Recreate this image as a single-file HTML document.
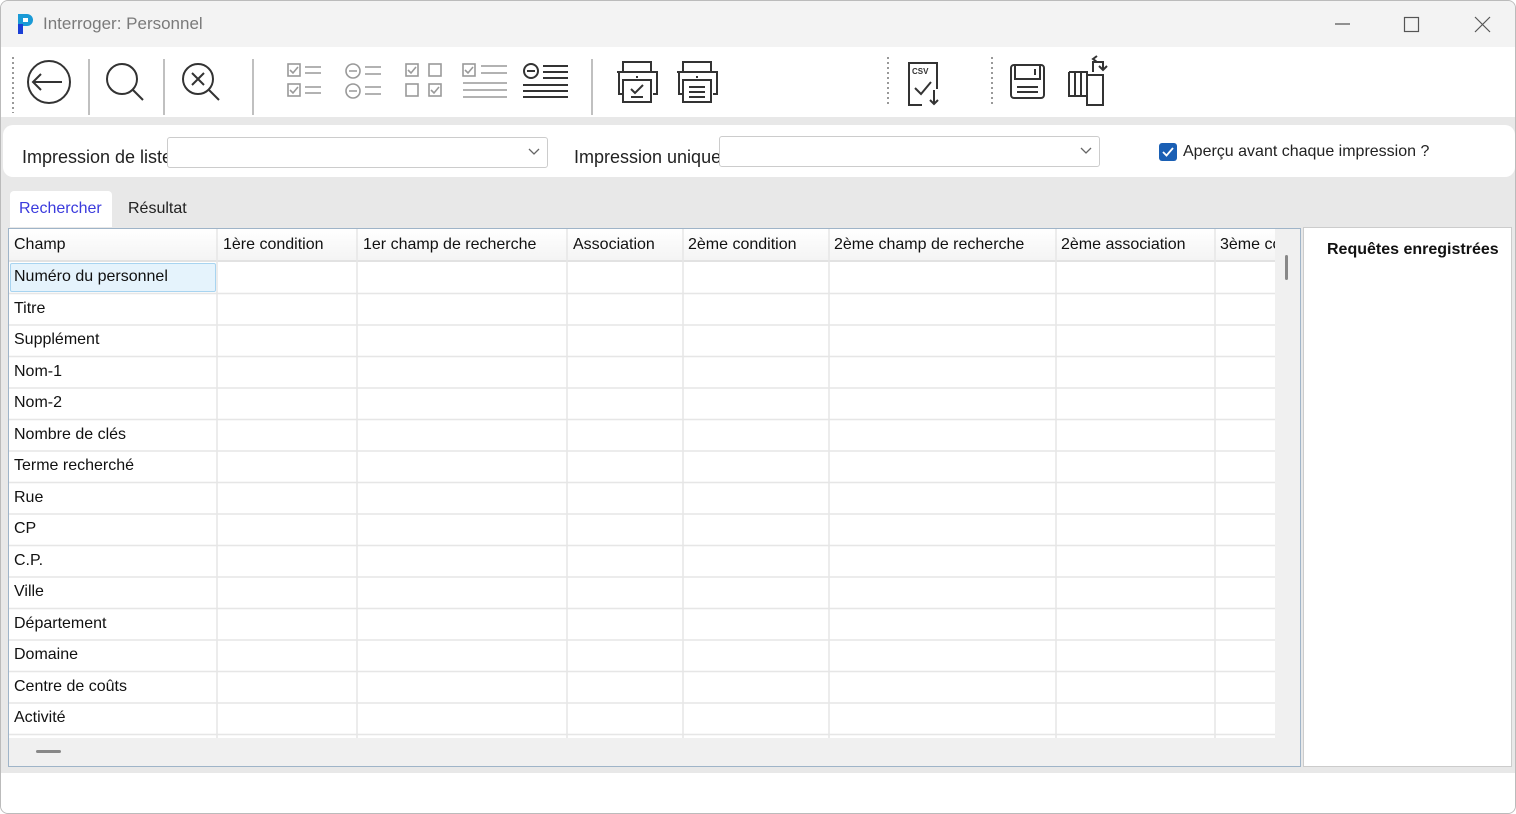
<!DOCTYPE html>
<html><head><meta charset="utf-8"><style>
*{margin:0;padding:0;box-sizing:border-box}
body{width:1516px;height:814px;overflow:hidden;background:#fff;font-family:"Liberation Sans",sans-serif;position:relative;color:#111}
.a{position:absolute}
.t{font-size:15px;white-space:nowrap}
svg{position:absolute;overflow:visible}
</style></head><body>
<div class="a" style="left:0;top:0;width:1516px;height:814px;border:1px solid #bbb;border-radius:8px;overflow:hidden;background:#e8e8e8">
<!-- title bar -->
<div class="a" style="left:0;top:0;width:1516px;height:46px;background:#f3f3f3"></div>
<svg style="left:14px;top:11px" width="22" height="24"><path d="M3 2h9a6 6 0 0 1 0 12h-4v8H3z" fill="#1a9ad6"/><path d="M3 12h5v10H3z" fill="#1a3fd6"/><rect x="8" y="6" width="5" height="4" fill="#fff"/></svg>
<div class="a t" style="left:42px;top:13px;font-size:17px;color:#7a7a7a">Interroger: Personnel</div>
<svg style="left:1334px;top:22px" width="16" height="2"><path d="M0 1h15" stroke="#555" stroke-width="1.2"/></svg>
<svg style="left:1403px;top:16px" width="16" height="16"><rect x="0.5" y="0.5" width="14" height="14" fill="none" stroke="#555" stroke-width="1.2"/></svg>
<svg style="left:1474px;top:16px" width="16" height="16"><path d="M0 0L15 15M15 0L0 15" stroke="#555" stroke-width="1.2"/></svg>
<!-- toolbar -->
<div class="a" style="left:0;top:46px;width:1516px;height:70px;background:#fff"></div>
<svg style="left:0;top:46px" width="1516" height="70">
<g stroke="#999" stroke-width="2" stroke-dasharray="2 3"><path d="M12 10v56M887 10v50M991 10v50"/></g>
<g stroke="#aaa" stroke-width="1.5"><path d="M88 12v56M163 12v56M252 12v56M591 12v56"/></g>
<g fill="none" stroke="#333" stroke-width="2">
<circle cx="48" cy="35" r="21"/><path d="M61 35H32M40 27l-8 8 8 8"/>
<circle cx="121" cy="32" r="15"/><path d="M132 43l10 10"/>
<circle cx="197" cy="32" r="15"/><path d="M208 43l10 10M191 26l12 12M203 26l-12 12"/>
</g>
<g fill="none" stroke="#999" stroke-width="1.6">
<rect x="287" y="17" width="12" height="12"/><rect x="287" y="37" width="12" height="12"/><path d="M289 23l3 3 5-6M289 43l3 3 5-6M304 20h16M304 26h16M304 40h16M304 46h16"/>
<circle cx="352" cy="24" r="7"/><circle cx="352" cy="44" r="7"/><path d="M348 24h8M348 44h8M364 20h16M364 27h16M364 40h16M364 47h16"/>
<rect x="405" y="17" width="12" height="12"/><rect x="428" y="17" width="12" height="12"/><rect x="405" y="37" width="12" height="12"/><rect x="428" y="37" width="12" height="12"/><path d="M407 23l3 3 5-6M430 43l3 3 5-6"/>
<rect x="462" y="17" width="12" height="12"/><path d="M464 23l3 3 5-6M480 19h26M480 26h26M462 36h44M462 43h44M462 50h44"/>
</g>
<g fill="none" stroke="#333" stroke-width="2">
<circle cx="530" cy="24" r="7"/><path d="M526 24h8M542 19h25M542 25h25M542 31h25M522 38h45M522 44h45M522 50h45"/>
<path d="M622 25v-10h28v10M616 25h40v22h-4M622 47h-4v-22M622 33h28v22h-28z"/><path d="M630 42l4 4 8-8M630 50h12M636 29v2"/>
<path d="M682 25v-10h28v10M676 25h40v22h-4M682 47h-4v-22M682 33h28v22h-28z"/><path d="M688 40h16M688 45h16M688 50h16M696 29v2"/>
<path d="M921 58h-13v-42h28v26"/><path d="M914 41l6 6 10-12M933 43v14M929 53l4 4 4-4"/>
<rect x="1010" y="18" width="33" height="33" rx="3"/><path d="M1014 18v14h25v-14M1016 40h21M1016 45h21M1034 22v6"/>
<path d="M1068 25h18v33h16v-30h-16M1068 25v24h18M1074 25v24M1080 25v24M1092 25v-10h10v8M1098 19l4 4 4-4M1096 15l-4-3 4-3"/>
</g>
<text x="911" y="27" font-size="8" font-weight="bold" fill="#333" font-family="Liberation Sans">CSV</text>
</svg>
<!-- filter panel -->
<div class="a" style="left:2px;top:124px;width:1512px;height:52px;background:#fff;border-radius:10px"></div>
<div class="a t" style="left:21px;top:146px;font-size:18px;color:#222;width:146px;overflow:hidden">Impression de liste</div>
<div class="a" style="left:166px;top:136px;width:381px;height:31px;border:1px solid #ccc;border-radius:3px;background:#fff"></div>
<svg style="left:527px;top:147px" width="12" height="8"><path d="M1 1l5 5 5-5" fill="none" stroke="#666" stroke-width="1.3"/></svg>
<div class="a t" style="left:573px;top:146px;font-size:18px;color:#222;width:146px;overflow:hidden">Impression unique</div>
<div class="a" style="left:718px;top:135px;width:381px;height:31px;border:1px solid #ccc;border-radius:3px;background:#fff"></div>
<svg style="left:1079px;top:146px" width="12" height="8"><path d="M1 1l5 5 5-5" fill="none" stroke="#666" stroke-width="1.3"/></svg>
<div class="a" style="left:1158px;top:142px;width:18px;height:18px;background:#1a5fb4;border-radius:3px"></div>
<svg style="left:1161px;top:146px" width="12" height="10"><path d="M1 5l3.5 3.5L11 1" fill="none" stroke="#fff" stroke-width="1.8"/></svg>
<div class="a t" style="left:1182px;top:142px;font-size:16px;color:#222">Aperçu avant chaque impression ?</div>
<!-- tabs -->
<div class="a" style="left:9px;top:190px;width:102px;height:36px;background:#fff;border-radius:4px 4px 0 0"></div>
<div class="a t" style="left:18px;top:199px;font-size:16px;color:#3b3bdd">Rechercher</div>
<div class="a t" style="left:127px;top:199px;font-size:16px;color:#222">Résultat</div>
<!-- grid -->
<div class="a" style="left:7px;top:227px;width:1293px;height:539px;border:1px solid #9fb4c8;background:#f0f0f0"></div>
<div class="a" style="left:8px;top:228px;width:1266px;height:509px;background:#fff;overflow:hidden">
<div class="a" style="left:0;top:0;width:1266px;height:33px;background:linear-gradient(#fff,#f4f4f4);border-bottom:2px solid #e2e2e2"></div>
<svg style="left:0;top:0" width="1266" height="509"><g stroke="#e6e6e6" stroke-width="1.5">
<path d="M208 0v509M348 0v509M558 0v509M674 0v509M820 0v509M1047 0v509M1206 0v509"/>
<path d="M0 64.5h1266M0 96h1266M0 127.5h1266M0 159h1266M0 190.5h1266M0 222h1266M0 253.5h1266M0 285h1266M0 316.5h1266M0 348h1266M0 379.5h1266M0 411h1266M0 442.5h1266M0 474h1266M0 505.5h1266"/></g></svg>
<div class="a" style="left:1px;top:34px;width:206px;height:29px;background:#e5f3fc;border:1px solid #a8d4f0;border-radius:2px"></div>
<div class="a t" style="left:5px;top:7px;font-size:16px">Champ</div>
<div class="a t" style="left:214px;top:7px;font-size:16px">1ère condition</div>
<div class="a t" style="left:354px;top:7px;font-size:16px">1er champ de recherche</div>
<div class="a t" style="left:564px;top:7px;font-size:16px">Association</div>
<div class="a t" style="left:679px;top:7px;font-size:16px">2ème condition</div>
<div class="a t" style="left:825px;top:7px;font-size:16px">2ème champ de recherche</div>
<div class="a t" style="left:1052px;top:7px;font-size:16px">2ème association</div>
<div class="a t" style="left:1211px;top:7px;font-size:16px">3ème condition</div>
<div class="a t" style="left:5px;top:39px;font-size:16px">Numéro du personnel</div>
<div class="a t" style="left:5px;top:71px;font-size:16px">Titre</div>
<div class="a t" style="left:5px;top:102px;font-size:16px">Supplément</div>
<div class="a t" style="left:5px;top:134px;font-size:16px">Nom-1</div>
<div class="a t" style="left:5px;top:165px;font-size:16px">Nom-2</div>
<div class="a t" style="left:5px;top:197px;font-size:16px">Nombre de clés</div>
<div class="a t" style="left:5px;top:228px;font-size:16px">Terme recherché</div>
<div class="a t" style="left:5px;top:260px;font-size:16px">Rue</div>
<div class="a t" style="left:5px;top:291px;font-size:16px">CP</div>
<div class="a t" style="left:5px;top:323px;font-size:16px">C.P.</div>
<div class="a t" style="left:5px;top:354px;font-size:16px">Ville</div>
<div class="a t" style="left:5px;top:386px;font-size:16px">Département</div>
<div class="a t" style="left:5px;top:417px;font-size:16px">Domaine</div>
<div class="a t" style="left:5px;top:449px;font-size:16px">Centre de coûts</div>
<div class="a t" style="left:5px;top:480px;font-size:16px">Activité</div>
</div>
<div class="a" style="left:1284px;top:254px;width:3px;height:25px;background:#888;border-radius:2px"></div>
<div class="a" style="left:35px;top:749px;width:25px;height:3px;background:#888;border-radius:2px"></div>
<!-- right panel -->
<div class="a" style="left:1302px;top:226px;width:209px;height:540px;background:#fff;border:1px solid #ccc"></div>
<div class="a t" style="left:1326px;top:240px;font-size:16px;font-weight:bold">Requêtes enregistrées</div>
<!-- bottom -->
<div class="a" style="left:0;top:772px;width:1516px;height:42px;background:#fff"></div>
</div>
</body></html>
